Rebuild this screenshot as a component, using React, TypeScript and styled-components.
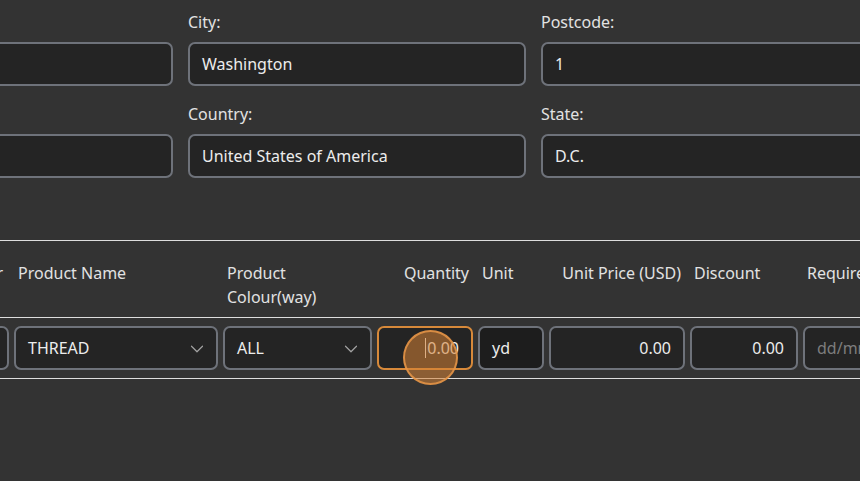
import React from "react";
import styled, { createGlobalStyle } from "styled-components";
import { ChevronDown } from "lucide-react";

const GlobalStyle = createGlobalStyle`
  html, body {
    margin: 0;
    padding: 0;
    background: #333333;
    overflow: hidden;
  }
  body {
    font-family: "Noto Sans", "Open Sans", sans-serif;
    font-size: 16px;
    color: #e6e6e6;
  }
`;

const Page = styled.div`
  width: 860px;
  height: 481px;
  overflow: hidden;
  padding-top: 10px;
  box-sizing: border-box;
`;

const FormGrid = styled.div`
  display: grid;
  grid-template-columns: repeat(3, 338px);
  column-gap: 15px;
  row-gap: 16px;
  margin-left: -165px;
`;

const FormField = styled.div`
  display: flex;
  flex-direction: column;
  gap: 8px;
`;

const Label = styled.label`
  line-height: 24px;
  min-height: 24px;
  color: #e2e2e2;
`;

const Field = styled.div<{ $align?: "left" | "right"; $dark?: boolean; $focused?: boolean; $placeholder?: boolean; $row?: boolean }>`
  height: 44px;
  box-sizing: border-box;
  border: 2px solid ${(p) => (p.$focused ? "#d7893a" : "#6e727a")};
  border-radius: 7px;
  background: ${(p) => (p.$dark ? "#1d1d1d" : "#242424")};
  color: ${(p) => (p.$placeholder ? "#7d7d7d" : "#ececec")};
  padding: 0 12px;
  display: flex;
  align-items: center;
  justify-content: ${(p) => (p.$align === "right" ? "flex-end" : "space-between")};
  white-space: nowrap;
  overflow: hidden;
  line-height: 24px;
`;

const Chevron = styled(ChevronDown)`
  color: #a3a3a3;
  flex: none;
  margin-right: -4px;
  margin-top: 2px;
`;

const Table = styled.div`
  margin-top: 62px;
  margin-left: -91px;
  width: 1100px;
  border-bottom: 1px solid #dedede;
`;

const Row = styled.div<{ $header?: boolean }>`
  display: grid;
  grid-template-columns: 100px 204px 149px 96px 66px 136px 108px 150px 100px;
  column-gap: 5px;
  border-top: 1px solid #dedede;
  padding: ${(p) => (p.$header ? "20px 0 8px" : "8px 0")};
  height: ${(p) => (p.$header ? "48px" : "44px")};
`;

const HeadCell = styled.div<{ $right?: boolean; $edge?: boolean }>`
  padding: 0 ${(p) => (p.$edge ? "6px" : "4px")} 0 4px;
  line-height: 24px;
  text-align: ${(p) => (p.$right ? "right" : "left")};
  color: #e2e2e2;
  white-space: ${(p) => (p.$right ? "nowrap" : "normal")};
`;

const Cell = styled.div`
  position: relative;
`;

const Caret = styled.span`
  display: inline-block;
  width: 1px;
  height: 20px;
  background: #e6e6e6;
  margin-right: 1px;
`;

const ClickRing = styled.div`
  position: absolute;
  left: 26px;
  top: 4px;
  width: 51px;
  height: 51px;
  border-radius: 50%;
  background: rgba(214, 130, 52, 0.55);
  border: 2px solid rgba(232, 150, 72, 0.85);
  pointer-events: none;
`;

export default function App() {
  return (
    <>
      <GlobalStyle />
      <Page>
        <FormGrid>
          <FormField>
            <Label />
            <Field />
          </FormField>
          <FormField>
            <Label>City:</Label>
            <Field>Washington</Field>
          </FormField>
          <FormField>
            <Label>Postcode:</Label>
            <Field>1</Field>
          </FormField>
          <FormField>
            <Label />
            <Field />
          </FormField>
          <FormField>
            <Label>Country:</Label>
            <Field>United States of America</Field>
          </FormField>
          <FormField>
            <Label>State:</Label>
            <Field>D.C.</Field>
          </FormField>
        </FormGrid>

        <Table>
          <Row $header>
            <HeadCell $right $edge>Number</HeadCell>
            <HeadCell>Product Name</HeadCell>
            <HeadCell>Product Colour(way)</HeadCell>
            <HeadCell $right>Quantity</HeadCell>
            <HeadCell>Unit</HeadCell>
            <HeadCell $right>Unit Price (USD)</HeadCell>
            <HeadCell>Discount</HeadCell>
            <HeadCell>Required Date</HeadCell>
            <HeadCell />
          </Row>
          <Row>
            <Cell>
              <Field $align="right">1</Field>
            </Cell>
            <Cell>
              <Field>
                THREAD
                <Chevron size={22} strokeWidth={1.3} />
              </Field>
            </Cell>
            <Cell>
              <Field>
                ALL
                <Chevron size={22} strokeWidth={1.3} />
              </Field>
            </Cell>
            <Cell>
              <Field $align="right" $focused>
                <Caret />
                0.00
              </Field>
              <ClickRing />
            </Cell>
            <Cell>
              <Field $dark>yd</Field>
            </Cell>
            <Cell>
              <Field $align="right">0.00</Field>
            </Cell>
            <Cell>
              <Field $align="right">0.00</Field>
            </Cell>
            <Cell>
              <Field $placeholder>dd/mm/yyyy</Field>
            </Cell>
            <Cell />
          </Row>
        </Table>
      </Page>
    </>
  );
}
